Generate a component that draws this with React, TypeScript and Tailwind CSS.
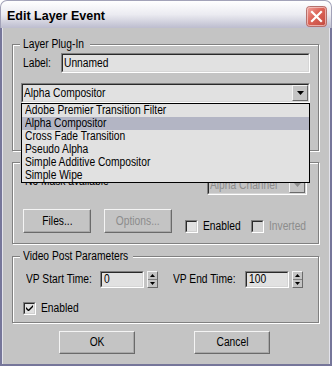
import React from "react";

const BODY = "bg-[#c4c4c4]";

function N({ children, center = false, className = "" }: { children?: React.ReactNode; center?: boolean; className?: string }) {
  return (
    <span className={"inline-block whitespace-nowrap scale-x-[0.82] " + (center ? "origin-center " : "origin-left ") + className}>
      {children}
    </span>
  );
}

function Sunken({
  className = "",
  bg = "bg-[#e1e1e1]",
  children,
}: {
  className?: string;
  bg?: string;
  children?: React.ReactNode;
}) {
  return (
    <div className={"border border-t-[#808080] border-l-[#808080] border-r-white border-b-white " + className}>
      <div className={"h-full w-full border border-t-[#2a2a2a] border-l-[#2a2a2a] border-r-[#d6d6d6] border-b-[#d6d6d6] " + bg}>
        {children}
      </div>
    </div>
  );
}

function Btn({ className = "", children }: { className?: string; children?: React.ReactNode }) {
  return (
    <div
      className={
        "flex items-center justify-center border border-t-[#f4f4f4] border-l-[#f4f4f4] border-r-[#6a6a6a] border-b-[#6a6a6a] shadow-[inset_-1px_-1px_0_#a8a8a8] leading-[15px] " +
        className
      }
    >
      <N center>{children}</N>
    </div>
  );
}

function Check({ checked = false, disabled = false, className = "" }: { checked?: boolean; disabled?: boolean; className?: string }) {
  return (
    <div className={"w-[13px] h-[13px] shrink-0 border border-t-[#808080] border-l-[#808080] border-r-white border-b-white " + className}>
      <div
        className={
          "w-full h-full border border-t-[#2a2a2a] border-l-[#2a2a2a] border-r-[#d0d0d0] border-b-[#d0d0d0] flex items-center justify-center " +
          (disabled ? "bg-[#d2d2d2]" : "bg-[#e1e1e1]")
        }
      >
        {checked && (
          <svg width="7" height="7" viewBox="0 0 7 7">
            <path d="M0 2 L0 4 L2 6 L3 6 L7 2 L7 0 L2.5 4.5 Z" fill="#000" />
          </svg>
        )}
      </div>
    </div>
  );
}

function Arrow({ disabled = false }: { disabled?: boolean }) {
  return (
    <div className="w-[16px] h-full shrink-0 border border-t-[#f4f4f4] border-l-[#f4f4f4] border-r-[#6a6a6a] border-b-[#6a6a6a] bg-[#c4c4c4] flex items-center justify-center">
      <svg width="7" height="4" viewBox="0 0 7 4">
        <path d="M0 0 L7 0 L3.5 4 Z" fill={disabled ? "#8c8c8c" : "#000"} />
      </svg>
    </div>
  );
}

function Combo({ text, disabled = false, className = "" }: { text: string; disabled?: boolean; className?: string }) {
  return (
    <Sunken className={className} bg={disabled ? "bg-[#c4c4c4]" : "bg-[#e1e1e1]"}>
      <div className="flex h-full items-center">
        <span className={"flex-1 min-w-0 pl-[1px] leading-[15px] " + (disabled ? "text-[#8c8c8c]" : "")}>
          <N>{text}</N>
        </span>
        <Arrow disabled={disabled} />
      </div>
    </Sunken>
  );
}

function Spinner({ className = "" }: { className?: string }) {
  return (
    <div className={"w-[11px] h-[17px] shrink-0 flex flex-col border border-t-[#f4f4f4] border-l-[#f4f4f4] border-r-[#6a6a6a] border-b-[#6a6a6a] " + className}>
      <div className="flex-1 flex items-center justify-center border-b border-[#808080]">
        <svg width="5" height="3" viewBox="0 0 5 3">
          <path d="M2.5 0 L5 3 L0 3 Z" fill="#000" />
        </svg>
      </div>
      <div className="flex-1 flex items-center justify-center">
        <svg width="5" height="3" viewBox="0 0 5 3">
          <path d="M0 0 L5 0 L2.5 3 Z" fill="#000" />
        </svg>
      </div>
    </div>
  );
}

function Group({
  title,
  legendW,
  className = "",
  children,
}: {
  title?: string;
  legendW: string;
  className?: string;
  children?: React.ReactNode;
}) {
  return (
    <div className={"border border-[#808080] shadow-[inset_1px_1px_0_#ffffff,1px_1px_0_#ffffff] " + className}>
      <div className={"-mt-[8px] ml-[7px] h-[15px] px-[3px] leading-[15px] overflow-visible " + legendW + " " + BODY}>
        {title ? <N>{title}</N> : null}
      </div>
      {children}
    </div>
  );
}

function CloseBtn() {
  return (
    <svg width="21" height="21" viewBox="0 0 21 21" className="mt-[5px] mr-[4px]">
      <defs>
        <linearGradient id="cg" x1="0" y1="0" x2="1" y2="1">
          <stop offset="0" stopColor="#f0a6a0" />
          <stop offset="0.45" stopColor="#dc6458" />
          <stop offset="1" stopColor="#c0483e" />
        </linearGradient>
      </defs>
      <rect x="0.5" y="0.5" width="20" height="20" rx="3" fill="url(#cg)" stroke="#b4706c" />
      <rect x="1.5" y="1.5" width="18" height="18" rx="2" fill="none" stroke="#f6d2ce" strokeOpacity="0.7" />
      <path d="M6 6 L15 15 M15 6 L6 15" stroke="#ffffff" strokeWidth="2.2" strokeLinecap="square" />
    </svg>
  );
}

const ITEMS = [
  "Adobe Premier Transition Filter",
  "Alpha Compositor",
  "Cross Fade Transition",
  "Pseudo Alpha",
  "Simple Additive Compositor",
  "Simple Wipe",
];

export default function App() {
  return (
    <div className="w-[332px] h-[368px] bg-white text-black text-[12.5px] [font-family:'Liberation_Sans',Arial,sans-serif]">
      <div className="w-[332px] h-[366px] flex flex-col">
        <div className="h-[28px] shrink-0 rounded-t-[7px] border border-b-0 border-[#a2a2b8] bg-gradient-to-b from-[#ffffff] via-[#ebebf1] to-[#bdbdcf] flex items-start justify-between">
          <div className="pl-[6px] pt-[8px] leading-[15px] text-[12.5px] font-bold">Edit Layer Event</div>
          <CloseBtn />
        </div>
        <div className={"flex-1 border-x-2 border-b-2 border-[#76769a] pt-[16px] pl-[10px] pr-[11px] shadow-[inset_1px_0_0_#e4e4ec,inset_-1px_0_0_#e4e4ec] " + BODY}>
          <Group title="Layer Plug-In" legendW="w-[70px]" className="h-[107px]">
            <div className="mt-[1px] flex items-center pl-[10px] pr-[8px]">
              <span className="w-[38px] shrink-0 leading-[15px]">
                <N>Label:</N>
              </span>
              <Sunken className="flex-1 h-[20px]">
                <div className="h-full flex items-center pl-[1px] leading-[15px]">
                  <N>Unnamed</N>
                </div>
              </Sunken>
            </div>
            <div className="mt-[10px] pl-[8px] pr-[8px]">
              <div className="relative">
                <Combo text="Alpha Compositor" className="h-[20px]" />
                <div className="absolute left-0 top-full w-full h-[80px] z-10 border border-black bg-[#e1e1e1] overflow-hidden">
                  {ITEMS.map((t, i) => (
                    <div key={t} className={"h-[13px] leading-[13px] pl-[3px] " + (i === 1 ? "bg-[#b3b5c4]" : "")}>
                      <N>{t}</N>
                    </div>
                  ))}
                </div>
              </div>
            </div>
          </Group>

          <Group legendW="w-[40px]" className="mt-[11px] h-[82px]">
            <div className="mt-[5px] flex items-start pl-[12px] pr-[11px] h-[20px]">
              <div className="leading-[15px] -mt-[1px]">
                <N>No Mask available</N>
              </div>
              <Combo text="Alpha Channel" disabled className="ml-auto w-[100px] h-[20px]" />
            </div>
            <div className="mt-[14px] flex items-end pl-[10px] h-[24px]">
              <Btn className="w-[68px] h-[24px]">Files...</Btn>
              <Btn className="ml-[13px] w-[68px] h-[24px] text-[#8c8c8c]">Options...</Btn>
              <Check className="ml-[13px]" />
              <span className="ml-[5px] w-[48px] shrink-0 leading-[13px]">
                <N>Enabled</N>
              </span>
              <Check disabled />
              <span className="ml-[5px] w-[45px] shrink-0 leading-[13px] text-[#8c8c8c]">
                <N>Inverted</N>
              </span>
            </div>
          </Group>

          <Group title="Video Post Parameters" legendW="w-[113px]" className="mt-[12px] h-[67px]">
            <div className="mt-[7px] flex items-center pl-[13px] h-[17px]">
              <span className="w-[74px] shrink-0 leading-[15px]">
                <N>VP Start Time:</N>
              </span>
              <Sunken className="w-[44px] h-[17px] shrink-0">
                <div className="h-full flex items-center pl-[2px] leading-[13px]">
                  <N>0</N>
                </div>
              </Sunken>
              <Spinner className="ml-[3px]" />
              <span className="ml-[15px] w-[72px] shrink-0 leading-[15px]">
                <N>VP End Time:</N>
              </span>
              <Sunken className="w-[44px] h-[17px] shrink-0">
                <div className="h-full flex items-center pl-[2px] leading-[13px]">
                  <N>100</N>
                </div>
              </Sunken>
              <Spinner className="ml-[3px]" />
            </div>
            <div className="mt-[13px] flex items-center pl-[10px]">
              <Check checked />
              <span className="ml-[5px] leading-[15px]">
                <N>Enabled</N>
              </span>
            </div>
          </Group>

          <div className="mt-[8px] flex">
            <Btn className="ml-[47px] w-[76px] h-[23px]">OK</Btn>
            <Btn className="ml-[59px] w-[76px] h-[23px]">Cancel</Btn>
          </div>
        </div>
      </div>
    </div>
  );
}
